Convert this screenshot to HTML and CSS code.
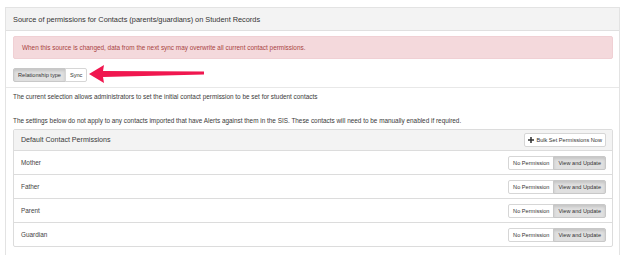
FILE: index.html
```html
<!DOCTYPE html>
<html>
<head>
<meta charset="utf-8">
<link rel="stylesheet" href="styles.css">
</head>
<body>
<div class="panel">
  <div class="panel-heading"><span class="panel-title">Source of permissions for Contacts (parents/guardians) on Student Records</span></div>
  <div class="panel-body">
    <div class="alert">When this source is changed, data from the next sync may overwrite all current contact permissions.</div>
    <div class="source-row">
      <div class="btn-group small">
        <span class="btn active">Relationship type</span>
        <span class="btn">Sync</span>
      </div>
      <svg class="arrow" width="120" height="24" viewBox="0 0 120 24">
        <path d="M1 12 L16 3 L15 9 L116 9.5 L116 12.5 L15 15 L16 21 Z" fill="#f0174f"/>
      </svg>
    </div>
  </div>
  <div class="section">
    <p class="note first">The current selection allows administrators to set the initial contact permission to be set for student contacts</p>
    <p class="note">The settings below do not apply to any contacts imported that have Alerts against them in the SIS. These contacts will need to be manually enabled if required.</p>
    <div class="inner">
      <div class="inner-heading">
        <span class="inner-title">Default Contact Permissions</span>
        <span class="btn bulk"><svg class="plus" width="6" height="6" viewBox="0 0 7 7"><path d="M2.6 0h1.8v2.6H7v1.8H4.4V7H2.6V4.4H0V2.6h2.6z" fill="#333"/></svg>Bulk Set Permissions Now</span>
      </div>
      <div class="row"><span class="label">Mother</span><div class="btn-group"><span class="btn">No Permission</span><span class="btn active">View and Update</span></div></div>
      <div class="row"><span class="label">Father</span><div class="btn-group"><span class="btn">No Permission</span><span class="btn active">View and Update</span></div></div>
      <div class="row"><span class="label">Parent</span><div class="btn-group"><span class="btn">No Permission</span><span class="btn active">View and Update</span></div></div>
      <div class="row"><span class="label">Guardian</span><div class="btn-group"><span class="btn">No Permission</span><span class="btn active">View and Update</span></div></div>
    </div>
  </div>
</div>
</body>
</html>
```
FILE: styles.css
```css
* { box-sizing: border-box; }
html, body { margin: 0; padding: 0; background: #fff; }
body {
  font-family: "Liberation Sans", Arial, sans-serif;
  color: #3a3a3a;
  width: 633px;
  height: 255px;
  overflow: hidden;
}
.panel {
  margin: 7px 13px 0 5px;
  border: 1px solid #e3e3e3;
  border-bottom: none;
  height: 248px;
}
.panel-heading {
  height: 23px;
  background: #f3f3f3;
  border-bottom: 1px solid #e0e0e0;
  padding: 0 7px;
  display: flex;
  align-items: center;
}
.panel-title {
  font-size: 7.4px;
  letter-spacing: -0.02px;
  color: #333;
}
.panel-body {
  padding: 5px 6px 0 7px;
  height: 57px;
  border-bottom: 1px solid #e8e8e8;
}
.alert {
  height: 23px;
  background: #f4d9dc;
  border: 1px solid #f0d0d4;
  border-radius: 2px;
  color: #a94442;
  font-size: 6.4px;
  padding: 0 8px;
  display: flex;
  align-items: center;
}
.source-row {
  display: flex;
  align-items: center;
  margin-top: 9px;
  height: 14px;
  position: relative;
}
.arrow { position: absolute; left: 75px; top: -6px; }
.btn-group { display: flex; }
.btn {
  display: inline-flex;
  align-items: center;
  height: 14px;
  padding: 0 4px;
  font-size: 5.6px;
  color: #333;
  background: #fff;
  border: 1px solid #d6d6d6;
  white-space: nowrap;
}
.btn + .btn { margin-left: -1px; }
.btn-group .btn:first-child { border-radius: 2px 0 0 2px; }
.btn-group .btn:last-child { border-radius: 0 2px 2px 0; }
.btn.active {
  background: #e0e0e0;
  border-color: #c8c8c8;
  box-shadow: inset 0 2px 3px rgba(0,0,0,0.12);
}
.section { padding: 0 6px 0 7px; }
.note {
  margin: 0;
  font-size: 6.4px;
  line-height: 10px;
}
.note.first { margin-top: 4px; }
.note + .note { margin-top: 14px; }
.inner {
  margin-top: 3px;
  border: 1px solid #dcdcdc;
  border-radius: 2px;
}
.inner-heading {
  height: 21px;
  background: #f3f3f3;
  border-bottom: 1px solid #dcdcdc;
  display: flex;
  align-items: center;
  justify-content: space-between;
  padding: 0 6px 0 7px;
}
.inner-title { font-size: 7.1px; }
.btn.bulk { border-radius: 2px; padding: 0 3px 0 3px; height: 14px; }
.plus { margin-right: 2px; }
.row {
  height: 24px;
  border-bottom: 1px solid #dcdcdc;
  display: flex;
  align-items: center;
  justify-content: space-between;
  padding: 0 6px 0 7px;
}
.row:last-child { border-bottom: none; height: 23px; }
.label { font-size: 6.4px; color: #444; }
```
